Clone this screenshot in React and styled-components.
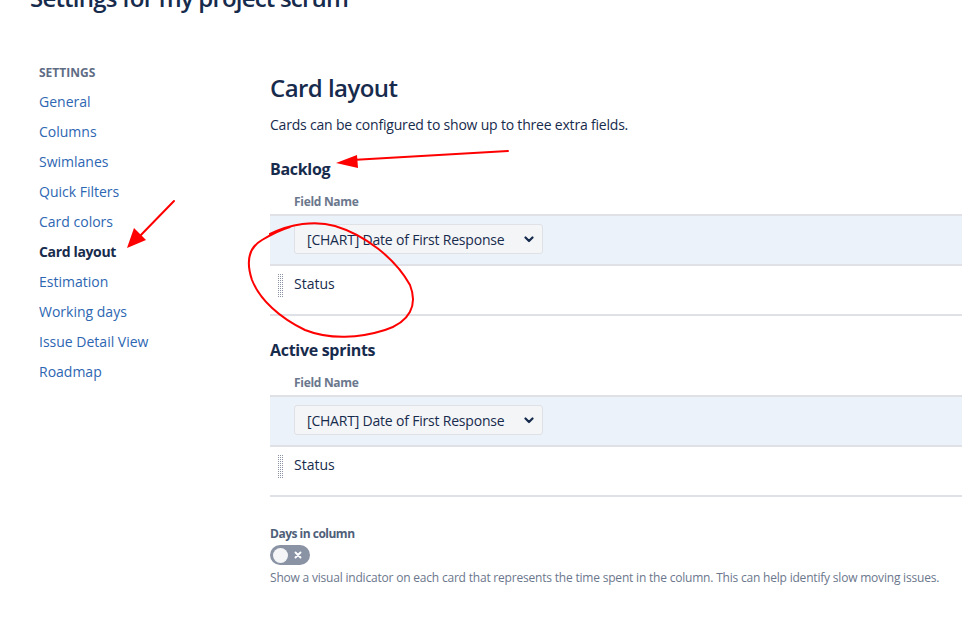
import React from "react";
import styled, { createGlobalStyle } from "styled-components";

const Global = createGlobalStyle`
  html, body { margin: 0; padding: 0; background: #fff; overflow: hidden; }
  body { font-family: "Open Sans", "Noto Sans", sans-serif; color: #172b4d; }
  * { box-sizing: border-box; }
`;

const Page = styled.div`
  position: relative;
  width: 962px;
  height: 630px;
  overflow: hidden;
`;

const Header = styled.h1`
  margin: -18px 0 0 30px;
  font-size: 24px;
  line-height: 32px;
  font-weight: 600;
  letter-spacing: -0.8px;
  color: #172b4d;
  white-space: nowrap;
`;

const Body = styled.div`
  display: grid;
  grid-template-columns: 270px 1fr;
`;

const Sidebar = styled.nav`
  padding: 51px 0 0 39px;
  display: flex;
  flex-direction: column;
`;

const SideHeading = styled.div`
  font-size: 12px;
  line-height: 16px;
  font-weight: 700;
  color: #5e6c84;
  text-transform: uppercase;
  margin-bottom: 6px;
`;

const SideLink = styled.a`
  display: block;
  font-size: 14px;
  line-height: 30px;
  height: 30px;
  color: ${(p) => (p.$active ? "#172b4d" : "#2d66b2")};
  font-weight: ${(p) => (p.$active ? 700 : 400)};
  letter-spacing: ${(p) => (p.$active ? "-0.35px" : "0")};
  text-decoration: none;
  white-space: nowrap;
`;

const Main = styled.main`
  padding-top: 58px;
  display: flex;
  flex-direction: column;
`;

const Title = styled.h2`
  margin: 0;
  font-size: 24px;
  line-height: 32px;
  font-weight: 600;
  letter-spacing: -0.55px;
  color: #172b4d;
`;

const Intro = styled.p`
  margin: 11px 0 0;
  font-size: 14px;
  line-height: 20px;
  letter-spacing: -0.2px;
`;

const SectionTitle = styled.h3`
  margin: ${(p) => p.$top}px 0 0;
  font-size: 16px;
  line-height: 20px;
  font-weight: 700;
  letter-spacing: -0.3px;
  color: #172b4d;
`;

const ColHead = styled.div`
  margin: 15px 0 4px;
  padding-left: 24px;
  font-size: 12px;
  line-height: 16px;
  font-weight: 700;
  letter-spacing: -0.3px;
  color: #6b778c;
`;

const Table = styled.div`
  border-top: 2px solid #dfe1e6;
`;

const Row = styled.div`
  position: relative;
  height: 50px;
  border-bottom: 2px solid #dfe1e6;
  background: ${(p) => (p.$selected ? "#ebf2f9" : "#fff")};
  display: flex;
  align-items: flex-start;
  padding-left: 24px;
  padding-top: 8px;
`;

const Handle = styled.svg`
  position: absolute;
  left: 8px;
  top: 8px;
`;

const Select = styled.div`
  width: 249px;
  height: 30px;
  border: 1px solid #dfe1e6;
  border-radius: 3px;
  background: #f4f5f7;
  display: flex;
  align-items: center;
  justify-content: space-between;
  padding: 0 8px 0 12px;
  font-size: 14px;
  letter-spacing: -0.2px;
  color: #172b4d;
  white-space: nowrap;
`;

const CellText = styled.span`
  font-size: 14px;
  line-height: 20px;
  color: #172b4d;
`;

const OptionLabel = styled.div`
  margin-top: 29px;
  font-size: 12px;
  line-height: 16px;
  font-weight: 700;
  letter-spacing: -0.5px;
  color: #505f79;
`;

const Toggle = styled.div`
  margin-top: 3px;
  width: 40px;
  height: 20px;
  border-radius: 10px;
  background: #8993a4;
  display: flex;
  align-items: center;
  justify-content: space-between;
  padding: 0 8px 0 3px;
`;

const Knob = styled.span`
  width: 15px;
  height: 15px;
  border-radius: 50%;
  background: #f4f5f7;
`;

const Help = styled.div`
  margin-top: 5px;
  font-size: 12px;
  line-height: 16px;
  letter-spacing: -0.2px;
  color: #6b778c;
  white-space: nowrap;
`;

const Overlay = styled.svg`
  position: absolute;
  left: 0;
  top: 0;
  pointer-events: none;
`;

const Chevron = () => (
  <svg width="10" height="7" viewBox="0 0 10 7">
    <path d="M1.5 1.5 L5 5 L8.5 1.5" fill="none" stroke="#172b4d" strokeWidth="2.2" strokeLinecap="round" strokeLinejoin="round" />
  </svg>
);

const Cross = () => (
  <svg width="8" height="8" viewBox="0 0 8 8">
    <path d="M1.5 1.5 L6.5 6.5 M6.5 1.5 L1.5 6.5" stroke="#fff" strokeWidth="1.9" strokeLinecap="round" />
  </svg>
);

const dots = [];
for (let c = 0; c < 3; c++) {
  for (let r = 0; r < 12; r++) {
    dots.push(<rect key={`${c}-${r}`} x={c * 2} y={r * 2} width="1" height="1" fill="#8993a4" />);
  }
}

const DragHandle = () => (
  <Handle width="6" height="24" viewBox="0 0 6 24" shapeRendering="crispEdges">
    {dots}
  </Handle>
);

const links = [
  "General",
  "Columns",
  "Swimlanes",
  "Quick Filters",
  "Card colors",
  "Card layout",
  "Estimation",
  "Working days",
  "Issue Detail View",
  "Roadmap",
];

const FieldTable = () => (
  <>
    <ColHead>Field Name</ColHead>
    <Table>
      <Row $selected>
        <Select>
          <span>[CHART] Date of First Response</span>
          <Chevron />
        </Select>
      </Row>
      <Row>
        <DragHandle />
        <CellText>Status</CellText>
      </Row>
    </Table>
  </>
);

export default function App() {
  return (
    <Page>
      <Global />
      <Header>Settings for my project scrum</Header>
      <Body>
        <Sidebar>
          <SideHeading>Settings</SideHeading>
          {links.map((l) => (
            <SideLink key={l} href="#" $active={l === "Card layout"}>
              {l}
            </SideLink>
          ))}
        </Sidebar>
        <Main>
          <Title>Card layout</Title>
          <Intro>Cards can be configured to show up to three extra fields.</Intro>
          <SectionTitle $top={24}>Backlog</SectionTitle>
          <FieldTable />
          <SectionTitle $top={24}>Active sprints</SectionTitle>
          <FieldTable />
          <OptionLabel>Days in column</OptionLabel>
          <Toggle>
            <Knob />
            <Cross />
          </Toggle>
          <Help>
            Show a visual indicator on each card that represents the time spent in the column. This can help identify slow moving issues.
          </Help>
        </Main>
      </Body>
      <Overlay width="962" height="630" viewBox="0 0 962 630">
        <g stroke="#ff0000" strokeWidth="2" fill="none" strokeLinecap="round">
          <path d="M174 201 L138 238" />
          <path d="M508 151 L352 160" />
          <path d="M270 234 C290 224 315 220 335 226 C365 235 395 258 410 285 C418 305 410 322 385 330 C360 338 330 340 305 330 C280 318 260 300 252 280 C246 262 248 248 262 240 C272 234 280 230 290 227" />
        </g>
        <g fill="#ff0000">
          <polygon points="127,248 134,228 146,240" />
          <polygon points="336,163 357,155 358,168" />
        </g>
      </Overlay>
    </Page>
  );
}
